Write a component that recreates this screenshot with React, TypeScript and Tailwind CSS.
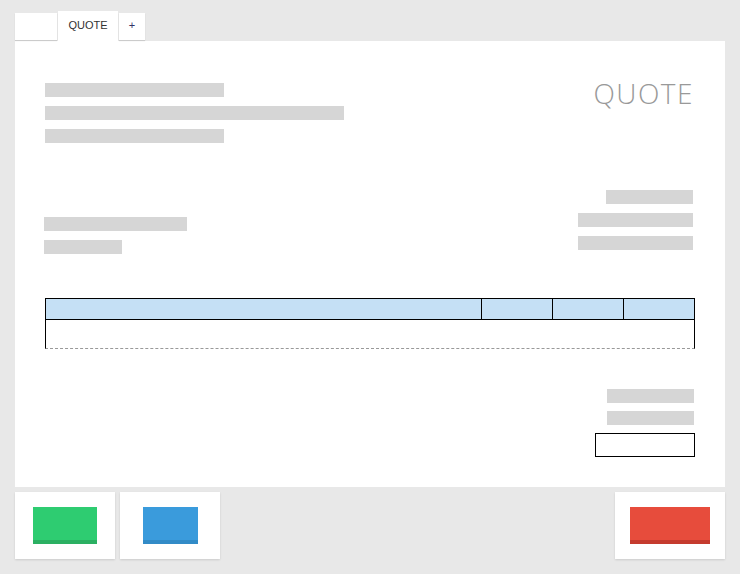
import React from "react";

const Bar = ({ w }: { w: string }) => <div className={`h-[14px] bg-[#d6d6d6] ${w}`} />;

export default function App() {
  return (
    <div className="w-[740px] h-[574px] bg-[#e8e8e8] overflow-hidden" style={{ fontFamily: '"Liberation Sans", Arial, sans-serif' }}>
      <div className="px-[15px] pt-[11px]">
        {/* tabs */}
        <div className="flex items-end gap-[1px]">
          <div className="w-[42px] h-[27px] bg-white shadow-[0_1px_1px_rgba(0,0,0,0.12)] mb-[1px]" />
          <div className="w-[60px] h-[30px] bg-white flex items-center justify-center text-[11px] text-[#333] pb-[2px]">QUOTE</div>
          <div className="w-[26px] h-[27px] bg-white shadow-[0_1px_1px_rgba(0,0,0,0.12)] mb-[1px] flex items-center justify-center text-[11px] text-[#336] pb-[2px]">+</div>
        </div>
        {/* panel */}
        <div className="bg-white h-[446px] px-[30px] pt-[38px]">
          <div className="flex justify-between items-start">
            <div className="flex flex-col gap-[9px] mt-[4px]">
              <Bar w="w-[179px]" />
              <Bar w="w-[299px]" />
              <Bar w="w-[179px]" />
            </div>
            <div className="text-[28px] leading-none font-light text-[#999] tracking-[1.5px] mr-[1px]" style={{ fontFamily: '"Open Sans", sans-serif' }}>QUOTE</div>
          </div>
          <div className="flex justify-between items-start mt-[47px] -ml-[1px] mr-[2px]">
            <div className="flex flex-col gap-[9px] mt-[27px]">
              <Bar w="w-[143px]" />
              <Bar w="w-[78px]" />
            </div>
            <div className="flex flex-col gap-[9px] items-end">
              <Bar w="w-[87px]" />
              <Bar w="w-[115px]" />
              <Bar w="w-[115px]" />
            </div>
          </div>
          {/* table */}
          <div className="mt-[44px]">
            <div className="flex h-[21px] border-x border-t border-black bg-[#c5e0f5]">
              <div className="w-[435px]" />
              <div className="w-[71px] border-l border-black" />
              <div className="w-[71px] border-l border-black" />
              <div className="flex-1 border-l border-black" />
            </div>
            <div className="h-[30px] border-x border-t border-black border-b border-b-[#999]" style={{ borderBottomStyle: "dashed" }} />
          </div>
          {/* totals */}
          <div className="flex flex-col items-end mt-[40px]">
            <div className="flex flex-col gap-[8px] items-end mr-[1px]">
              <Bar w="w-[87px]" />
              <Bar w="w-[87px]" />
            </div>
            <div className="mt-[8px] w-[100px] h-[24px] border border-black" />
          </div>
        </div>
        {/* bottom */}
        <div className="flex justify-between mt-[5px]">
          <div className="flex gap-[5px]">
            <div className="w-[100px] h-[67px] bg-white shadow-[0_1px_2px_rgba(0,0,0,0.12)] flex items-center justify-center">
              <div className="w-[64px] h-[37px] bg-[#2ecc71] border-b-4 border-[#2bb062]" />
            </div>
            <div className="w-[100px] h-[67px] bg-white shadow-[0_1px_2px_rgba(0,0,0,0.12)] flex items-center justify-center">
              <div className="w-[55px] h-[37px] bg-[#3a9bdc] border-b-4 border-[#328bc7]" />
            </div>
          </div>
          <div className="w-[110px] h-[67px] bg-white shadow-[0_1px_2px_rgba(0,0,0,0.12)] flex items-center justify-center">
            <div className="w-[80px] h-[37px] bg-[#e74c3c] border-b-4 border-[#c53b2e]" />
          </div>
        </div>
      </div>
    </div>
  );
}
